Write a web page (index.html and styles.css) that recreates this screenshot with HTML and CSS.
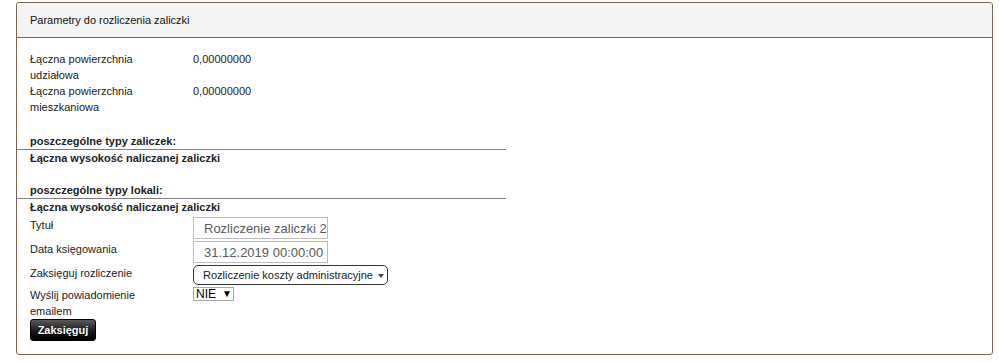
FILE: index.html
```html
<!DOCTYPE html>
<html lang="pl">
<head>
  <meta charset="UTF-8"/>
  <title>Parametry do rozliczenia zaliczki</title>
  <link rel="stylesheet" href="styles.css">
</head>
<body>
  <div class="panel">
    <div class="panel-head">Parametry do rozliczenia zaliczki</div>

    <div class="panel-body">
      <div class="row">
        <div class="lbl">Łączna powierzchnia udziałowa</div>
        <div class="val">0,00000000</div>
      </div>
      <div class="row">
        <div class="lbl">Łączna powierzchnia mieszkaniowa</div>
        <div class="val">0,00000000</div>
      </div>

      <div class="section first">poszczególne typy zaliczek:</div>
      <div class="sum">Łączna wysokość naliczanej zaliczki</div>

      <div class="section">poszczególne typy lokali:</div>
      <div class="sum">Łączna wysokość naliczanej zaliczki</div>

      <div class="form-row">
        <label class="lbl" for="title">Tytuł</label>
        <input type="text" id="title" class="txt" value="Rozliczenie zaliczki 2">
      </div>
      <div class="form-row">
        <label class="lbl" for="date">Data księgowania</label>
        <input type="text" id="date" class="txt" value="31.12.2019 00:00:00">
      </div>
      <div class="form-row">
        <div class="lbl">Zaksięguj rozliczenie</div>
        <button class="drop">Rozliczenie koszty administracyjne <span class="caret"></span></button>
      </div>
      <div class="form-row">
        <div class="lbl narrow">Wyślij powiadomienie emailem</div>
        <span class="select-box">NIE <span class="arrow">▼</span></span>
      </div>

      <button class="submit">Zaksięguj</button>
    </div>
  </div>
</body>
</html>
```

FILE: styles.css
```css
* { box-sizing:border-box; margin:0; padding:0 }
html, body {
  width:100%; height:100%;
  font-family:'Liberation Sans', Arial, sans-serif;
  font-size:11px; color:#222; background:#fff;
}
body { padding:2px 6px 0 16px }

.panel {
  border:1px solid #776550; border-radius:3px;
  background:#fff;
}
.panel-head {
  background:#f4f4f4; border-bottom:1px solid #776550;
  border-radius:3px 3px 0 0;
  padding:9px 13px; line-height:16px; color:#111;
}
.panel-body { padding:13px 13px 13px 13px }

.row { display:flex; line-height:16px }
.row .lbl { width:163px; padding-right:30px; flex:none }
.row .val { color:#222 }

.section {
  margin:16px 0 0 -13px; padding-left:13px; width:489px;
  font-weight:bold; line-height:16px;
  border-bottom:1px solid #7f7f7f;
}
.section.first { margin-top:18px }
.sum { font-weight:bold; line-height:16px }

.form-row { display:flex; align-items:flex-start; margin-top:2px; line-height:15px }
.form-row .lbl { width:163px; padding-right:26px; flex:none; padding-top:1px }
.form-row .lbl.narrow { padding-right:30px; line-height:15.5px }

.txt {
  width:135px; height:22px; padding:0 0 0 10px;
  border:1px solid #bdbdbd; background:#fff;
  font-family:inherit; font-size:13px; color:#5a5a5a;
}
.drop {
  width:195px; height:20px; margin-top:0;
  border:1px solid #333; border-radius:5px; background:#fff;
  font-family:inherit; font-size:11px; color:#222;
  text-align:left; padding:0 0 0 9px; cursor:pointer;
}
.caret {
  display:inline-block; vertical-align:middle; margin-left:2px;
  border-left:3px solid transparent; border-right:3px solid transparent;
  border-top:4px solid #444;
}
.select-box {
  display:inline-flex; align-items:center; gap:6px;
  width:41px; height:14px; margin-top:0;
  border:1px solid #a8a8a8; padding:0 0 0 2px;
  font-size:12px; line-height:12px; color:#000;
}
.select-box .arrow { font-size:10px }

.submit {
  display:block; width:66px; height:22px;
  border:1px solid #000; border-radius:3px;
  background:linear-gradient(#5a5a5a, #1a1a1a 55%, #000);
  color:#fff; font-family:inherit; font-size:11px; font-weight:bold;
  text-shadow:0 1px 1px #000; cursor:pointer;
}
.submit:hover { opacity:.8 }
```
